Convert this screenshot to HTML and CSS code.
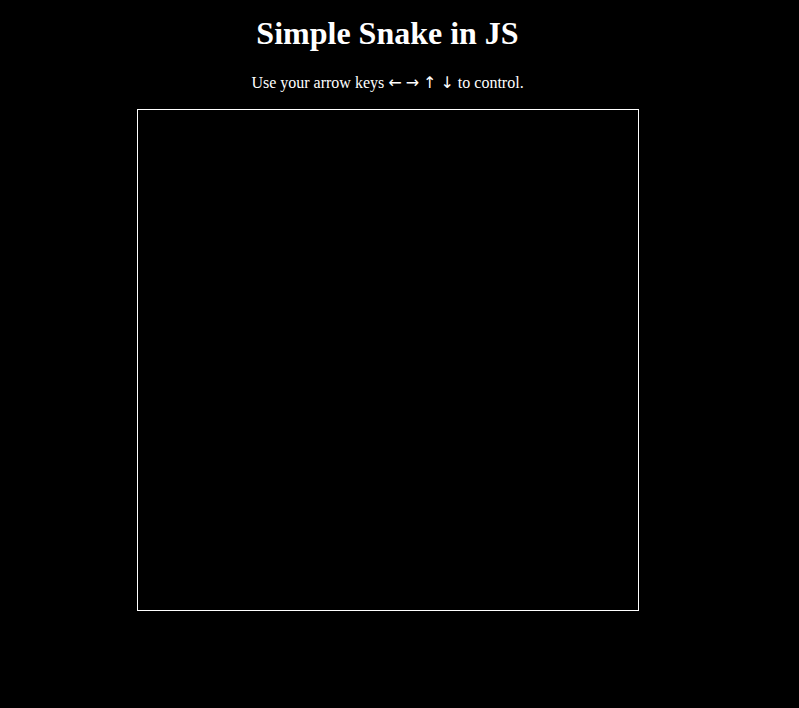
FILE: index.html
```html
<!DOCTYPE html>
<html lang="en">
<head>
<meta charset="utf-8">
<title>Simple Snake in JS</title>
<link rel="stylesheet" href="styles.css">
</head>
<body>
<main class="page">
  <h1 class="title">Simple Snake in JS</h1>
  <p class="hint">Use your arrow keys <span class="arrow">&larr;</span> <span class="arrow">&rarr;</span> <span class="arrow">&uarr;</span> <span class="arrow">&darr;</span> to control.</p>
  <canvas class="board" width="500" height="500"></canvas>
</main>
</body>
</html>
```

FILE: styles.css
```css
html, body {
  margin: 0;
  padding: 0;
  background: #000;
  color: #fff;
  font-family: "Liberation Serif", "Times New Roman", serif;
}

.page {
  width: 775px;
  text-align: center;
  padding-top: 15px;
}

.title {
  margin: 0;
  font-size: 32px;
  line-height: 37px;
  font-weight: bold;
}

.hint {
  margin: 22px 0 0;
  font-size: 16px;
  line-height: 18px;
}

.arrow {
  font-family: "DejaVu Sans", sans-serif;
  font-size: 16px;
  line-height: 18px;
}

.board {
  display: block;
  width: 500px;
  height: 500px;
  margin: 17px auto 0;
  border: 1px solid #fff;
  background: #000;
}
```
